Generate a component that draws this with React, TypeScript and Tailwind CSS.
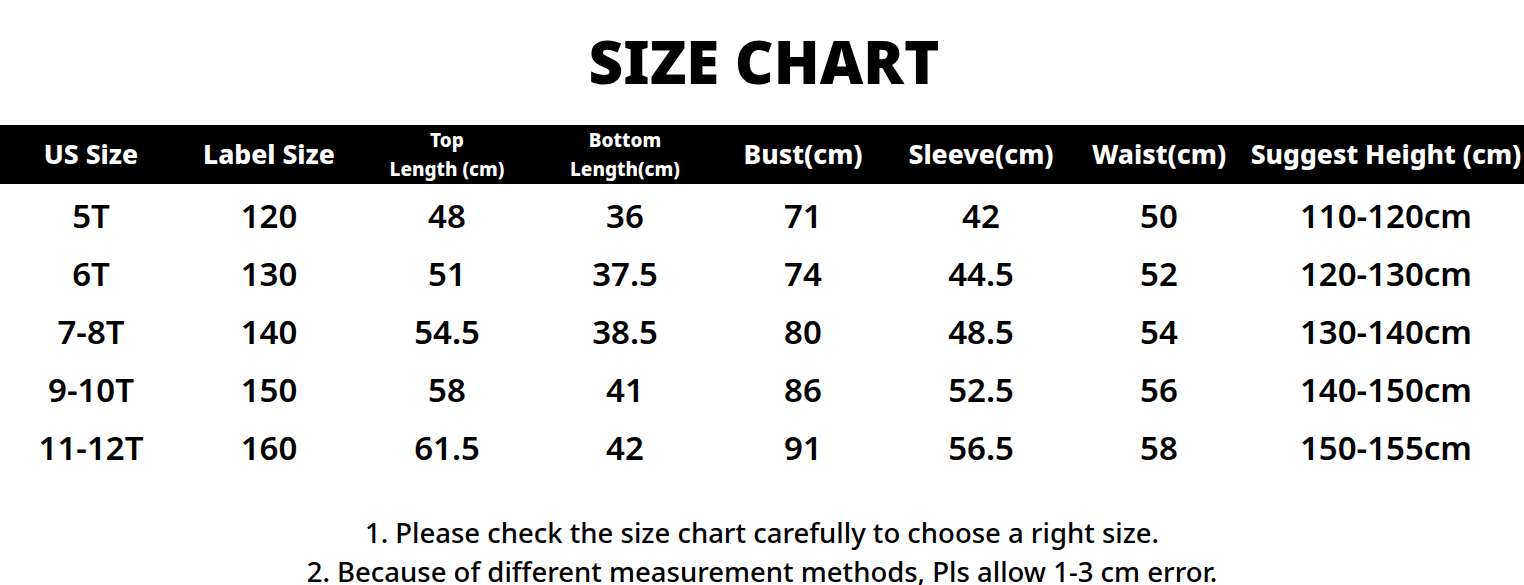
const headers: { label: string; small?: boolean }[] = [
  { label: "US Size" },
  { label: "Label Size" },
  { label: "Top\nLength (cm)", small: true },
  { label: "Bottom\nLength(cm)", small: true },
  { label: "Bust(cm)" },
  { label: "Sleeve(cm)" },
  { label: "Waist(cm)" },
  { label: "Suggest Height (cm)" },
];

const rows = [
  ["5T", "120", "48", "36", "71", "42", "50", "110-120cm"],
  ["6T", "130", "51", "37.5", "74", "44.5", "52", "120-130cm"],
  ["7-8T", "140", "54.5", "38.5", "80", "48.5", "54", "130-140cm"],
  ["9-10T", "150", "58", "41", "86", "52.5", "56", "140-150cm"],
  ["11-12T", "160", "61.5", "42", "91", "56.5", "58", "150-155cm"],
];

const grid = "grid grid-cols-[178px_178px_178px_178px_178px_178px_178px_1fr] pl-[2px]";

export default function App() {
  return (
    <div className="w-[1524px] h-[585px] bg-white overflow-hidden font-['Noto_Sans',sans-serif] text-black">
      {/* Title */}
      <div className="h-[125px] flex items-center justify-center pb-[3px] pl-[4px]">
        <h1 className="text-[60px] font-black leading-none">SIZE CHART</h1>
      </div>

      {/* Header bar */}
      <div className={`${grid} h-[59px] bg-black text-white items-center`}>
        {headers.map((h) =>
          h.small ? (
            <div key={h.label} className="text-center text-[19px] font-extrabold leading-[29px] whitespace-pre">
              {h.label}
            </div>
          ) : (
            <div key={h.label} className="text-center text-[26.5px] font-extrabold whitespace-nowrap">
              {h.label}
            </div>
          )
        )}
      </div>

      {/* Data rows */}
      <div className="pt-[3px]">
        {rows.map((r) => (
          <div key={r[0]} className={`${grid} h-[58px] items-center`}>
            {r.map((c, i) => (
              <div key={i} className="text-center text-[33px] font-semibold">
                {c}
              </div>
            ))}
          </div>
        ))}
      </div>

      {/* Notes */}
      <div className="pt-[36px] flex flex-col items-center text-[27.5px] font-medium leading-[39px]">
        <p>1. Please check the size chart carefully to choose a right size.</p>
        <p>2. Because of different measurement methods, Pls allow 1-3 cm error.</p>
      </div>
    </div>
  );
}
